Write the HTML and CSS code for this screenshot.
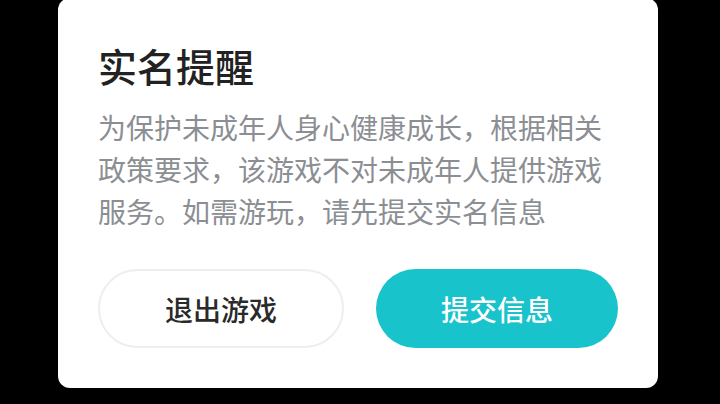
FILE: index.html
```html
<!DOCTYPE html>
<html lang="zh-CN">
<head>
  <meta charset="UTF-8">
  <title>实名提醒</title>
  <link rel="stylesheet" href="styles.css">
</head>
<body>
  <div class="dialog">
    <h2 class="dialog-title">实名提醒</h2>
    <p class="dialog-text">为保护未成年人身心健康成长，根据相关政策要求，该游戏不对未成年人提供游戏服务。如需游玩，请先提交实名信息</p>
    <div class="dialog-actions">
      <button class="btn btn-quit">退出游戏</button>
      <button class="btn btn-submit">提交信息</button>
    </div>
  </div>
</body>
</html>
```

FILE: styles.css
```css
body {
  margin: 0;
  height: 404px;
  background: #000;
  overflow: hidden;
  font-family: "Noto Sans CJK SC", "Noto Sans", sans-serif;
  display: flex;
  justify-content: center;
  align-items: flex-start;
}
.dialog {
  width: 600px;
  box-sizing: border-box;
  margin-top: -2px;
  margin-left: -4px;
  padding: 42px 40px 40px;
  background: #fff;
  border-radius: 12px;
}
.dialog-title {
  margin: 0;
  font-size: 39px;
  line-height: 50px;
  font-weight: 500;
  color: #222;
}
.dialog-text {
  margin: 16px 0 0;
  font-size: 28px;
  line-height: 42px;
  color: #8b8e93;
}
.dialog-actions {
  display: flex;
  gap: 32px;
  margin-top: 37px;
}
.btn {
  flex: 1;
  height: 79px;
  border-radius: 40px;
  font-family: inherit;
  font-size: 28px;
  font-weight: 500;
  cursor: pointer;
}
.btn-quit {
  background: #fff;
  border: 2px solid #eeeeee;
  color: #2a2a2a;
}
.btn-submit {
  background: #18c3cc;
  border: none;
  color: #fff;
}
```
